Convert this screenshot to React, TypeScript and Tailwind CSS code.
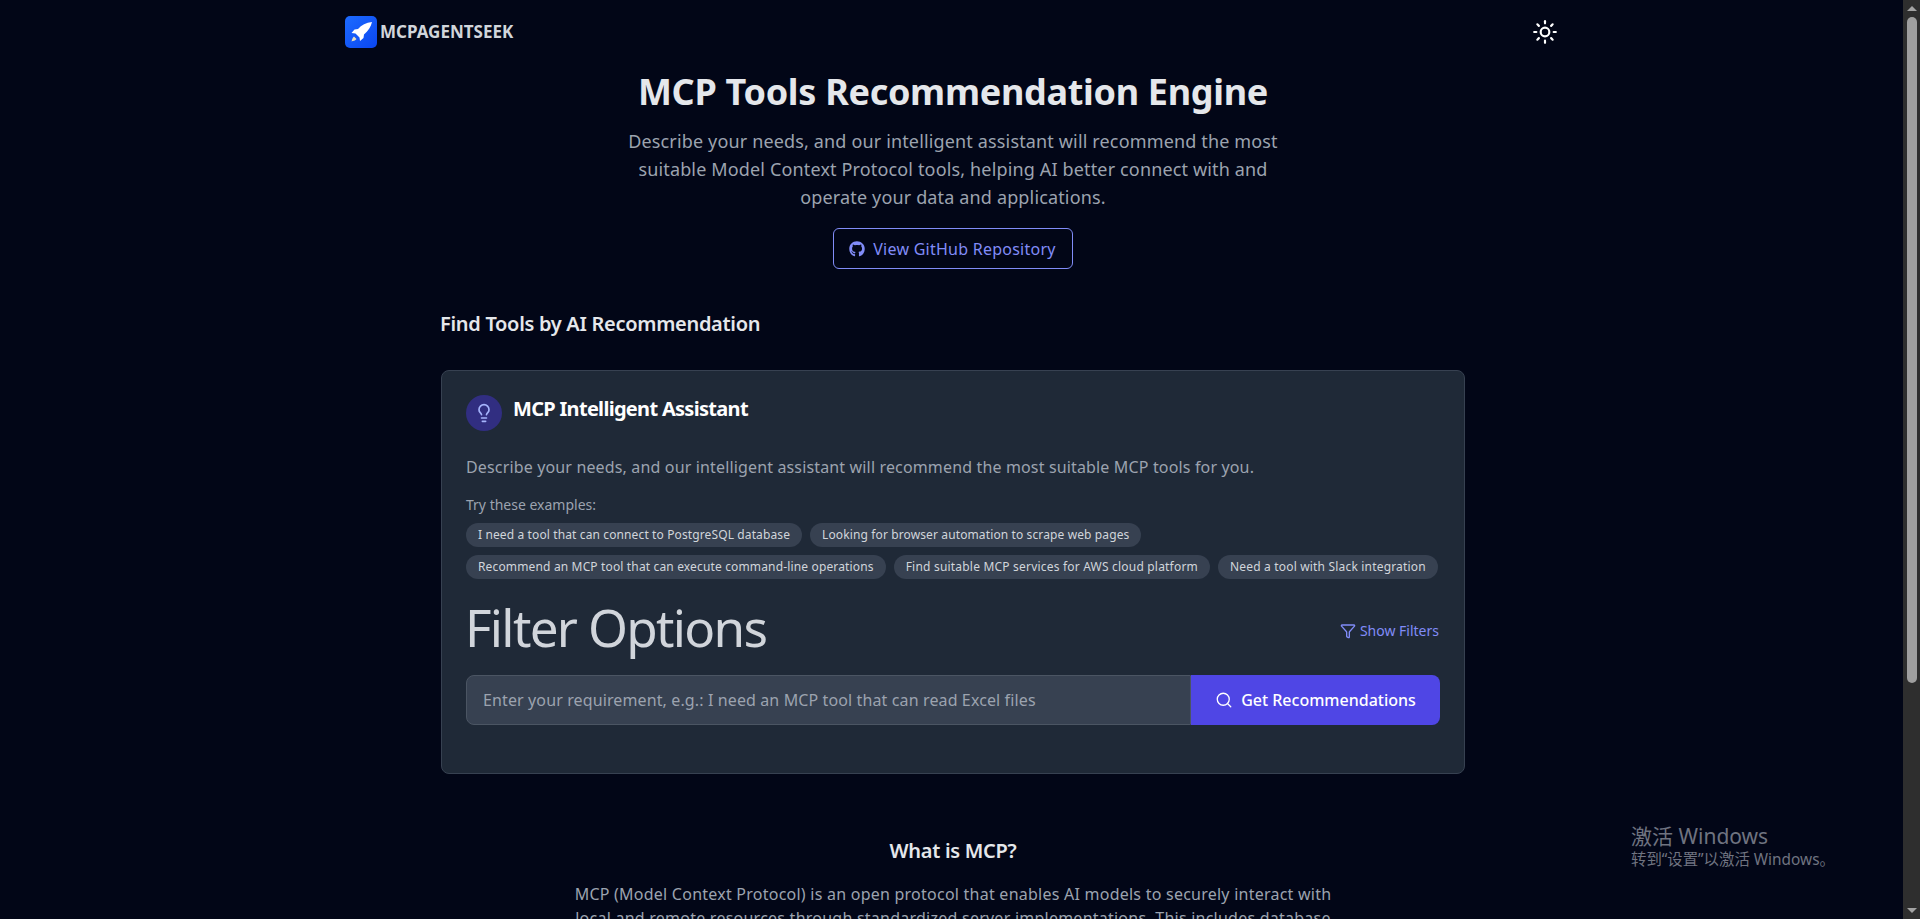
import { Filter, Lightbulb, Search, Sun } from 'lucide-react';
import { FaGithub } from 'react-icons/fa';

const row1 = [
  { text: 'I need a tool that can connect to PostgreSQL database', spacing: 'tracking-[0.12px]' },
  { text: 'Looking for browser automation to scrape web pages', spacing: 'tracking-[0.12px]' },
];
const row2 = [
  { text: 'Recommend an MCP tool that can execute command-line operations', spacing: 'tracking-[0.15px]' },
  { text: 'Find suitable MCP services for AWS cloud platform', spacing: 'tracking-[0.2px]' },
  { text: 'Need a tool with Slack integration', spacing: 'tracking-[0.18px]' },
];

function Logo() {
  return (
    <svg width="32" height="32" viewBox="0 0 32 32" className="shrink-0">
      <defs>
        <linearGradient id="logoBg" x1="0" y1="0" x2="1" y2="1">
          <stop offset="0" stopColor="#1d6bff" />
          <stop offset="1" stopColor="#0a46f0" />
        </linearGradient>
      </defs>
      <rect width="32" height="32" rx="5" fill="url(#logoBg)" />
      <path d="M27 6 C21 6.5 16.5 9 13 13 L9.5 13.5 L6.5 17 L10.5 17.5 L14.5 21.5 L15 25 L18.5 22 L19 18.5 C23 15 26 11 27 6 Z" fill="#fff" />
      <path d="M9 20.5 C7.5 21.5 7 24 6.5 25.5 C8 25 10.5 24.5 11.5 23 Z" fill="#e8dfc0" />
    </svg>
  );
}

function Chip({ text, spacing }: { text: string; spacing: string }) {
  return <span className={`h-6 rounded-full bg-[#374151] px-3 py-1 text-xs whitespace-nowrap text-[#d1d5db] ${spacing}`}>{text}</span>;
}

function Scrollbar() {
  return (
    <div className="flex w-[17px] shrink-0 flex-col items-center bg-[#2e2e2e]">
      <div className="flex h-[17px] items-center justify-center">
        <div className="h-0 w-0 border-x-[5px] border-b-[5px] border-x-transparent border-b-[#a3a3a3]" />
      </div>
      <div className="ml-[1px] h-[666px] w-[10px] rounded-full bg-[#9f9f9f]" />
      <div className="flex-1" />
      <div className="flex h-[17px] items-center justify-center">
        <div className="h-0 w-0 border-x-[5px] border-t-[5px] border-x-transparent border-t-[#a3a3a3]" />
      </div>
    </div>
  );
}

export default function App() {
  return (
    <div className="relative flex h-[919px] overflow-hidden bg-[#020617] font-['Noto_Sans','Noto_Sans_CJK_SC',sans-serif]">
      <div className="min-w-0 flex-1">
        <header className="ml-[345px] flex h-16 w-[1213px] items-center justify-between">
          <div className="flex items-center gap-[3px]">
            <Logo />
            <span className="text-[17px] font-bold text-[#d1d5db]">MCPAGENTSEEK</span>
          </div>
          <Sun size={26} className="text-white" />
        </header>
        <main className="ml-[441px] flex w-[1024px] flex-col">
          <div className="mt-[8px] flex flex-col items-center">
            <h1 className="text-4xl font-bold tracking-[-0.3px] text-[#e5e7eb]">MCP Tools Recommendation Engine</h1>
            <p className="mt-[15px] w-[672px] text-center text-lg tracking-[0.15px] text-[#9ca3af]">
              Describe your needs, and our intelligent assistant will recommend the most suitable Model Context Protocol tools, helping AI better connect with and operate your data and applications.
            </p>
            <button className="mt-[17px] -ml-[1px] flex h-[41px] w-[240px] items-center justify-center gap-2 rounded-md border border-[#818cf8] text-base tracking-[0.25px] text-[#818cf8]">
              <FaGithub size={16} />
              View GitHub Repository
            </button>
          </div>
          <h2 className="mt-[41px] -ml-[1px] text-xl font-semibold tracking-[-0.3px] text-[#e5e7eb]">Find Tools by AI Recommendation</h2>
          <section className="mt-8 flex h-[404px] flex-col rounded-lg border border-[#374151] bg-[#1f2937] p-6">
            <div className="flex gap-[11px]">
              <div className="flex h-9 w-9 items-center justify-center rounded-full bg-[#312e81]">
                <Lightbulb size={20} className="text-[#a5b4fc]" />
              </div>
              <h3 className="text-xl font-bold tracking-[-0.7px] text-white">MCP Intelligent Assistant</h3>
            </div>
            <p className="mt-6 text-base tracking-[0.15px] text-[#9ca3af]">Describe your needs, and our intelligent assistant will recommend the most suitable MCP tools for you.</p>
            <p className="mt-4 text-sm text-[#9ca3af]">Try these examples:</p>
            <div className="mt-2 flex gap-2">
              {row1.map((c) => <Chip key={c.text} text={c.text} spacing={c.spacing} />)}
            </div>
            <div className="mt-2 flex gap-2">
              {row2.map((c) => <Chip key={c.text} text={c.text} spacing={c.spacing} />)}
            </div>
            <div className="mt-5 flex items-center justify-between">
              <h1 className="-ml-[1px] text-[51.2px] leading-[1.1] tracking-[-1.7px] text-[#d1d5db]">Filter Options</h1>
              <button className="mr-[1px] flex items-center gap-1 pt-2 text-sm text-[#818cf8]">
                <Filter size={16} />
                Show Filters
              </button>
            </div>
            <div className="mt-[20px] flex h-[50px]">
              <div className="flex flex-1 items-center rounded-l-lg border border-[#4b5563] bg-[#374151] px-4 text-base tracking-[0.12px] text-[#9ca3af]">
                Enter your requirement, e.g.: I need an MCP tool that can read Excel files
              </div>
              <button className="flex w-[249px] items-center justify-center gap-2 rounded-r-lg bg-[#4f46e5] text-base font-medium text-white">
                <Search size={18} strokeWidth={1.75} />
                Get Recommendations
              </button>
            </div>
          </section>
          <h2 className="mt-[63px] text-center text-xl font-semibold tracking-[-0.3px] text-[#e5e7eb]">What is MCP?</h2>
          <p className="mx-auto mt-[17px] w-[768px] text-center text-base tracking-[0.24px] text-[#9ca3af]">
            MCP (Model Context Protocol) is an open protocol that enables AI models to securely interact with local and remote resources through standardized server implementations. This includes database connections, file access and more.
          </p>
        </main>
      </div>
      <Scrollbar />
      <div className="absolute top-[822px] left-[1631px] text-[#6f7380]">
        <div className="text-[21px] leading-7">激活 Windows</div>
        <div className="text-[15.4px] leading-[19px]">转到“设置”以激活 Windows。</div>
      </div>
    </div>
  );
}
